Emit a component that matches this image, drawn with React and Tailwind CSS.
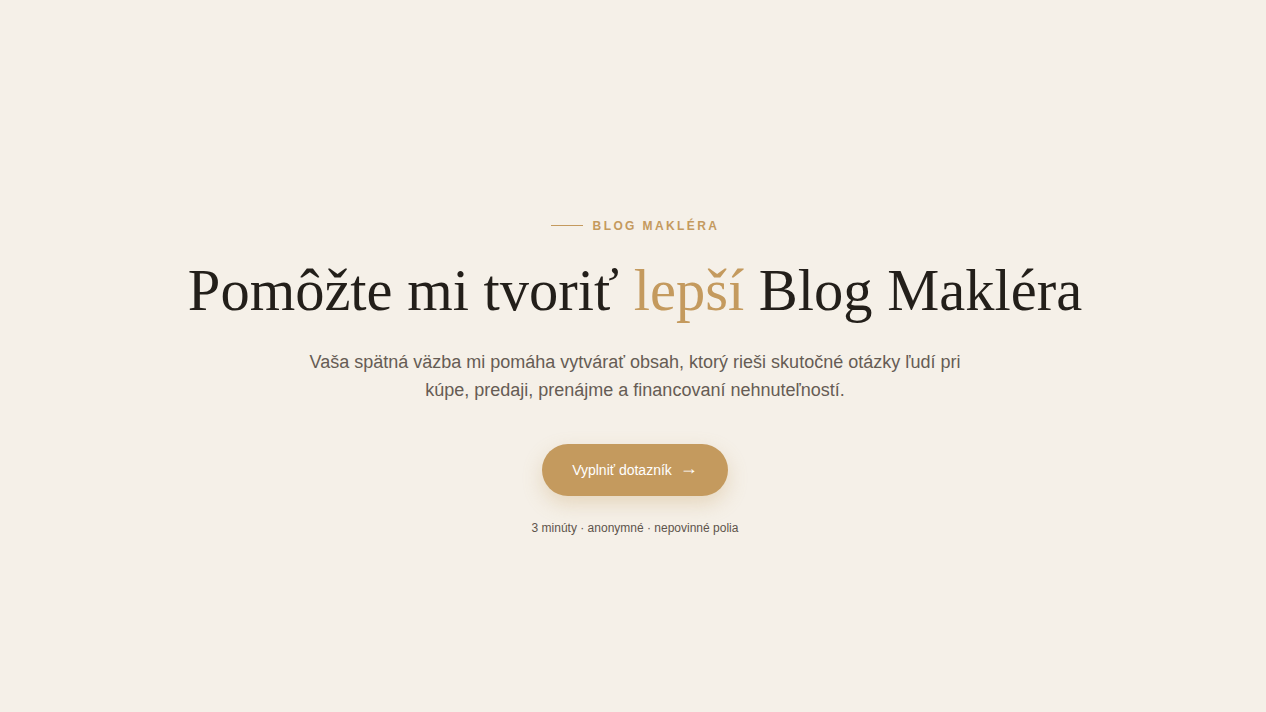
import React from 'react';

const App = () => {
    return (
        <div className="flex min-h-screen w-full items-center justify-center bg-[#f5f0e8] pl-7 pr-6 pt-[42px]" style={{ fontFamily: '"Liberation Sans", Arial, sans-serif' }}>
            <div className="flex flex-col items-center text-center">
                <div className="flex items-center gap-2.5">
                    <span className="h-px w-8 bg-[#c49a5e]" />
                    <span className="text-xs font-bold uppercase tracking-[0.2em] text-[#c49a5e]">Blog Makléra</span>
                </div>

                <h1
                    className="mt-[22px] text-[58.5px] leading-[1.2] font-normal text-[#231f1a]"
                    style={{ fontFamily: '"Liberation Serif", "Times New Roman", serif' }}
                >
                    Pomôžte mi tvoriť <span className="text-[#c49a5e]">lepší</span> Blog Makléra
                </h1>

                <p className="mt-[22px] max-w-[670px] text-lg leading-7 text-[#665c54]">
                    Vaša spätná väzba mi pomáha vytvárať obsah, ktorý rieši skutočné otázky ľudí pri kúpe, predaji, prenájme a financovaní nehnuteľností.
                </p>

                <button
                    type="button"
                    className="mt-10 flex h-[52px] w-[186px] items-center justify-center gap-2 rounded-full bg-[#c49a5e] text-sm text-white shadow-[0_8px_20px_rgba(196,154,94,0.3)]"
                >
                    Vyplniť dotazník
                    <span className="-translate-y-[2px] text-lg leading-none">→</span>
                </button>

                <p className="mt-6 text-xs text-[#5e544b]">3 minúty · anonymné · nepovinné polia</p>
            </div>
        </div>
    );
};

export default App;
